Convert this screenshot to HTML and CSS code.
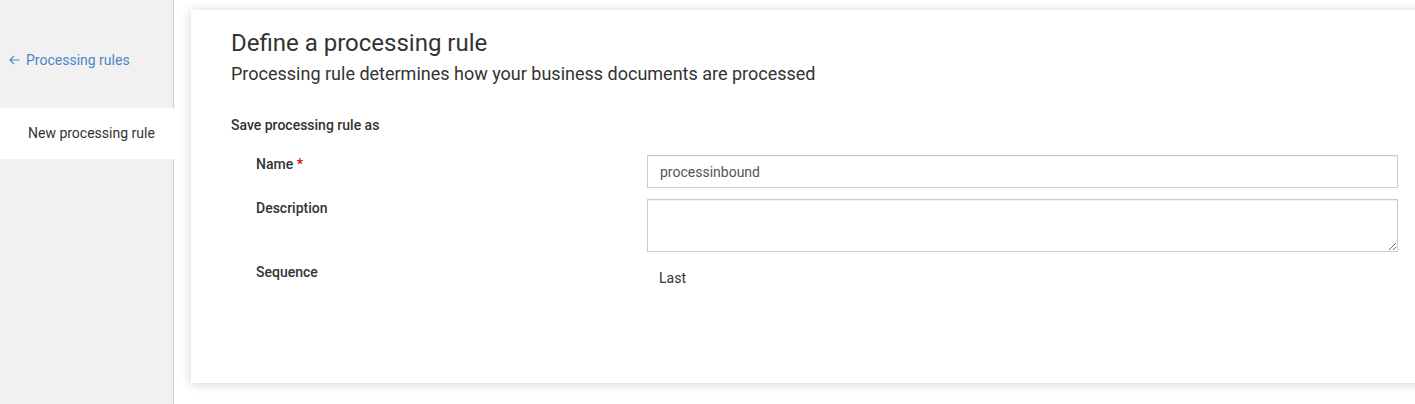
FILE: index.html
```html
<!DOCTYPE html>
<html>
<head>
<meta charset="utf-8">
<link rel="stylesheet" href="styles.css">
</head>
<body>
<div class="layout">
  <aside class="sidebar">
    <a class="back-link" href="#"><svg class="arrow" width="11" height="10" viewBox="0 0 11 10"><path d="M10.5 5H1M5 0.8L0.9 5L5 9.2" fill="none" stroke="#4a86c4" stroke-width="1.2"/></svg>Processing rules</a>
    <div class="nav-item active">New processing rule</div>
  </aside>
  <main class="main">
    <section class="card">
      <h1 class="title">Define a processing rule</h1>
      <p class="subtitle">Processing rule determines how your business documents are processed</p>
      <h2 class="section-title">Save processing rule as</h2>
      <div class="form">
        <label class="label">Name <span class="req">*</span></label>
        <input class="input" type="text" value="processinbound">
        <label class="label">Description</label>
        <textarea class="textarea"></textarea>
        <label class="label">Sequence</label>
        <div class="static">Last</div>
      </div>
    </section>
  </main>
</div>
</body>
</html>
```
FILE: styles.css
```css
* { box-sizing: border-box; }
html, body { margin: 0; padding: 0; height: 100%; }
body {
  font-family: Roboto, "Liberation Sans", Arial, sans-serif;
  color: #333;
  background: #fff;
  overflow: hidden;
}
.layout {
  display: flex;
  height: 404px;
}
.sidebar {
  width: 174px;
  flex: 0 0 174px;
  background: #f1f1f1;
  border-right: 1px solid #cfcfcf;
  padding-top: 51px;
  display: flex;
  flex-direction: column;
}
.back-link {
  font-size: 14px;
  line-height: 18px;
  color: #4a86c4;
  text-decoration: none;
  padding-left: 9px;
  display: flex;
  align-items: center;
}
.arrow {
  margin-right: 6px;
  margin-top: -1px;
}
.nav-item {
  margin-top: 39px;
  height: 51px;
  display: flex;
  align-items: center;
  padding-left: 28px;
  padding-bottom: 2px;
  font-size: 14px;
  color: #333;
}
.nav-item.active {
  background: #fff;
  margin-right: -10px;
}
.main {
  flex: 1;
  padding: 10px 0 0 17px;
  overflow: hidden;
}
.card {
  width: 1260px;
  height: 373px;
  background: #fff;
  box-shadow: 0 1px 10px rgba(0, 0, 0, 0.18);
  padding: 20px 40px;
}
.title {
  margin: 0;
  font-size: 24px;
  font-weight: 400;
  line-height: 26px;
  color: #333;
}
.subtitle {
  margin: 7px 0 0;
  font-size: 18px;
  line-height: 22px;
  color: #333;
}
.section-title {
  margin: 31px 0 0;
  font-size: 14px;
  font-weight: 500;
  line-height: 18px;
  color: #333;
}
.form {
  display: grid;
  grid-template-columns: 391px 751px;
  row-gap: 11px;
  margin-top: 21px;
  padding-left: 25px;
}
.label {
  font-size: 14px;
  font-weight: 500;
  line-height: 18px;
  color: #333;
}
.req { color: #e00000; }
.input, .textarea {
  width: 100%;
  border: 1px solid #cccccc;
  box-shadow: inset 0 1px 1px rgba(0, 0, 0, 0.06);
  font-family: Roboto, "Liberation Sans", Arial, sans-serif;
  font-size: 14px;
  color: #555;
  padding: 0 12px;
  background: #fff;
  border-radius: 0;
  outline: none;
}
.input { height: 33px; }
.textarea { height: 53px; resize: vertical; display: block; margin: 0; }
.static {
  font-size: 14px;
  line-height: 18px;
  padding: 6px 0 0 12px;
  color: #333;
}
```
